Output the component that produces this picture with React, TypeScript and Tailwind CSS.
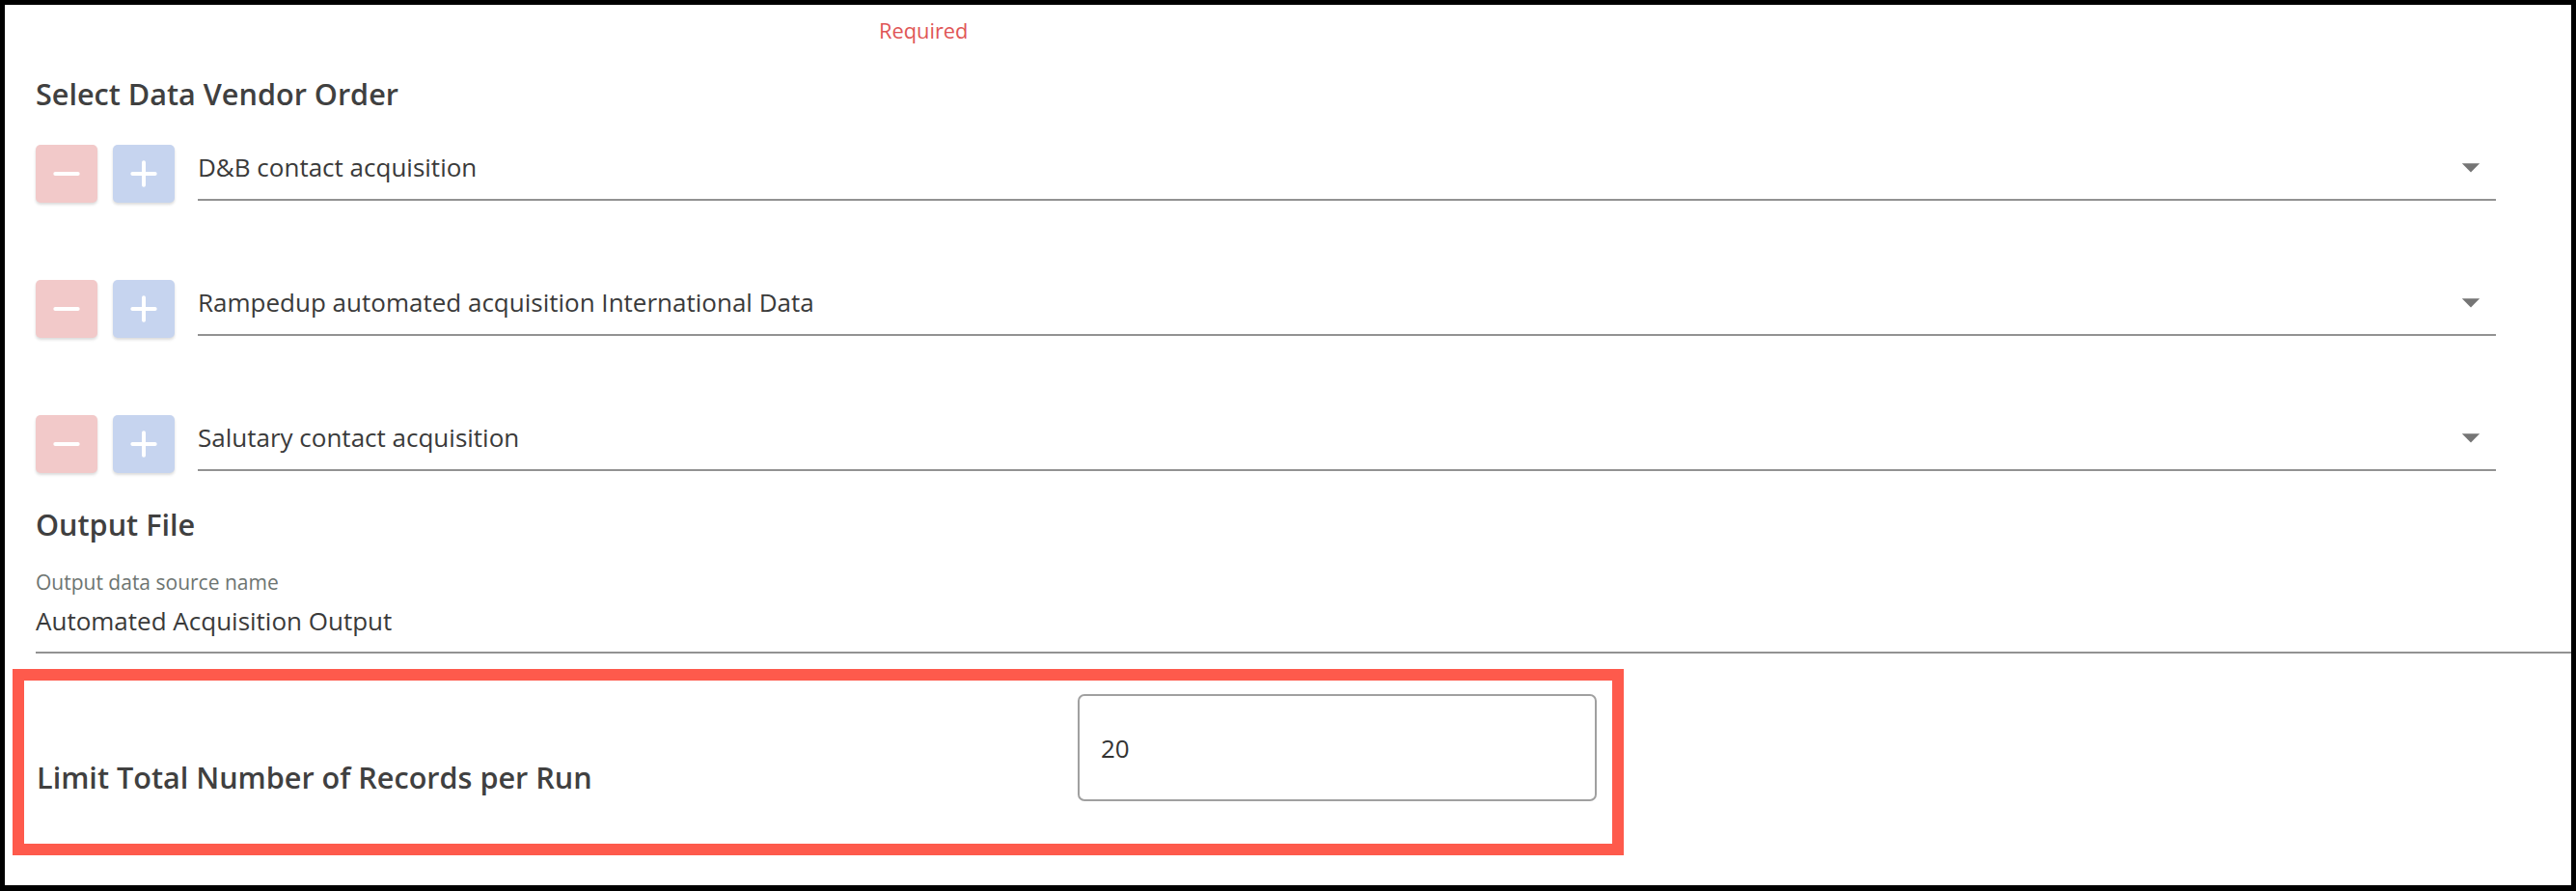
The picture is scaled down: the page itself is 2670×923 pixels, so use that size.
import { Minus, Plus } from 'lucide-react';

const vendors = [
  'D&B contact acquisition',
  'Rampedup automated acquisition International Data',
  'Salutary contact acquisition',
];

const ArrowDropDown = () => (
  <svg viewBox="0 0 24 24" className="h-[44px] w-[44px] fill-[#757575]">
    <path d="M7 10l5 5 5-5z" />
  </svg>
);

const VendorRow = ({ name }: { name: string }) => (
  <div className="flex h-[60px] items-start">
    <button className="flex h-[60px] w-[64px] items-center justify-center rounded-[5px] bg-[#f2c9c9] shadow-[0_2px_3px_rgba(0,0,0,0.14)]">
      <Minus className="h-[40px] w-[40px] text-white" strokeWidth={2.4} />
    </button>
    <button className="ml-[16px] flex h-[60px] w-[64px] items-center justify-center rounded-[5px] bg-[#c6d4ef] shadow-[0_2px_3px_rgba(0,0,0,0.14)]">
      <Plus className="h-[40px] w-[40px] text-white" strokeWidth={2.4} />
    </button>
    <div className="ml-[24px] flex h-[58px] flex-1 items-start border-b-2 border-[#929292] pt-[5px]">
      <span className="flex-1 text-[26px] leading-[36px] text-[#3a3a3a]">{name}</span>
      <span className="mr-[4px] -mt-[4px]">
        <ArrowDropDown />
      </span>
    </div>
  </div>
);

export default function App() {
  return (
    <div className="h-[923px] w-[2670px] overflow-hidden border-[5px] border-b-[6px] border-black bg-white font-['Open_Sans',sans-serif]">
      <p className="ml-[906px] mt-[12.6px] text-[21.8px] leading-[28px] text-[#df5656]">Required</p>

      <h2 className="ml-[32px] mt-[31.4px] text-[30.6px] font-semibold leading-[40px] text-[#404040]">
        Select Data Vendor Order
      </h2>

      <div className="ml-[32px] mr-[78px] mt-[33px] flex flex-col gap-[80px]">
        {vendors.map((v) => (
          <VendorRow key={v} name={v} />
        ))}
      </div>

      <h2 className="ml-[32px] mt-[33px] text-[30.6px] font-semibold leading-[40px] text-[#404040]">Output File</h2>

      <div className="ml-[32px] mt-[25.6px]">
        <label className="block text-[21px] leading-[28px] text-[#6d7471]">Output data source name</label>
        <div className="mt-[8.4px] border-b-2 border-[#929292] pb-[14px] text-[26px] leading-[36px] text-[#3a3a3a]">
          Automated Acquisition Output
        </div>
      </div>

      {/* highlighted setting */}
      <div className="ml-[8px] mt-[16px] flex h-[193px] w-[1670px] items-start border-[12px] border-[#fe5a4c]">
        <div className="w-[1092px] pl-[13px] pt-[80px] text-[30.6px] font-semibold leading-[40px] text-[#404040]">
          Limit Total Number of Records per Run
        </div>
        <div className="mt-[14px] flex h-[111px] w-[538px] items-center rounded-[7px] border-2 border-[#a0a0a0] pl-[22px] pt-[2px] text-[26px] leading-[36px] text-[#333333]">
          20
        </div>
      </div>
    </div>
  );
}
